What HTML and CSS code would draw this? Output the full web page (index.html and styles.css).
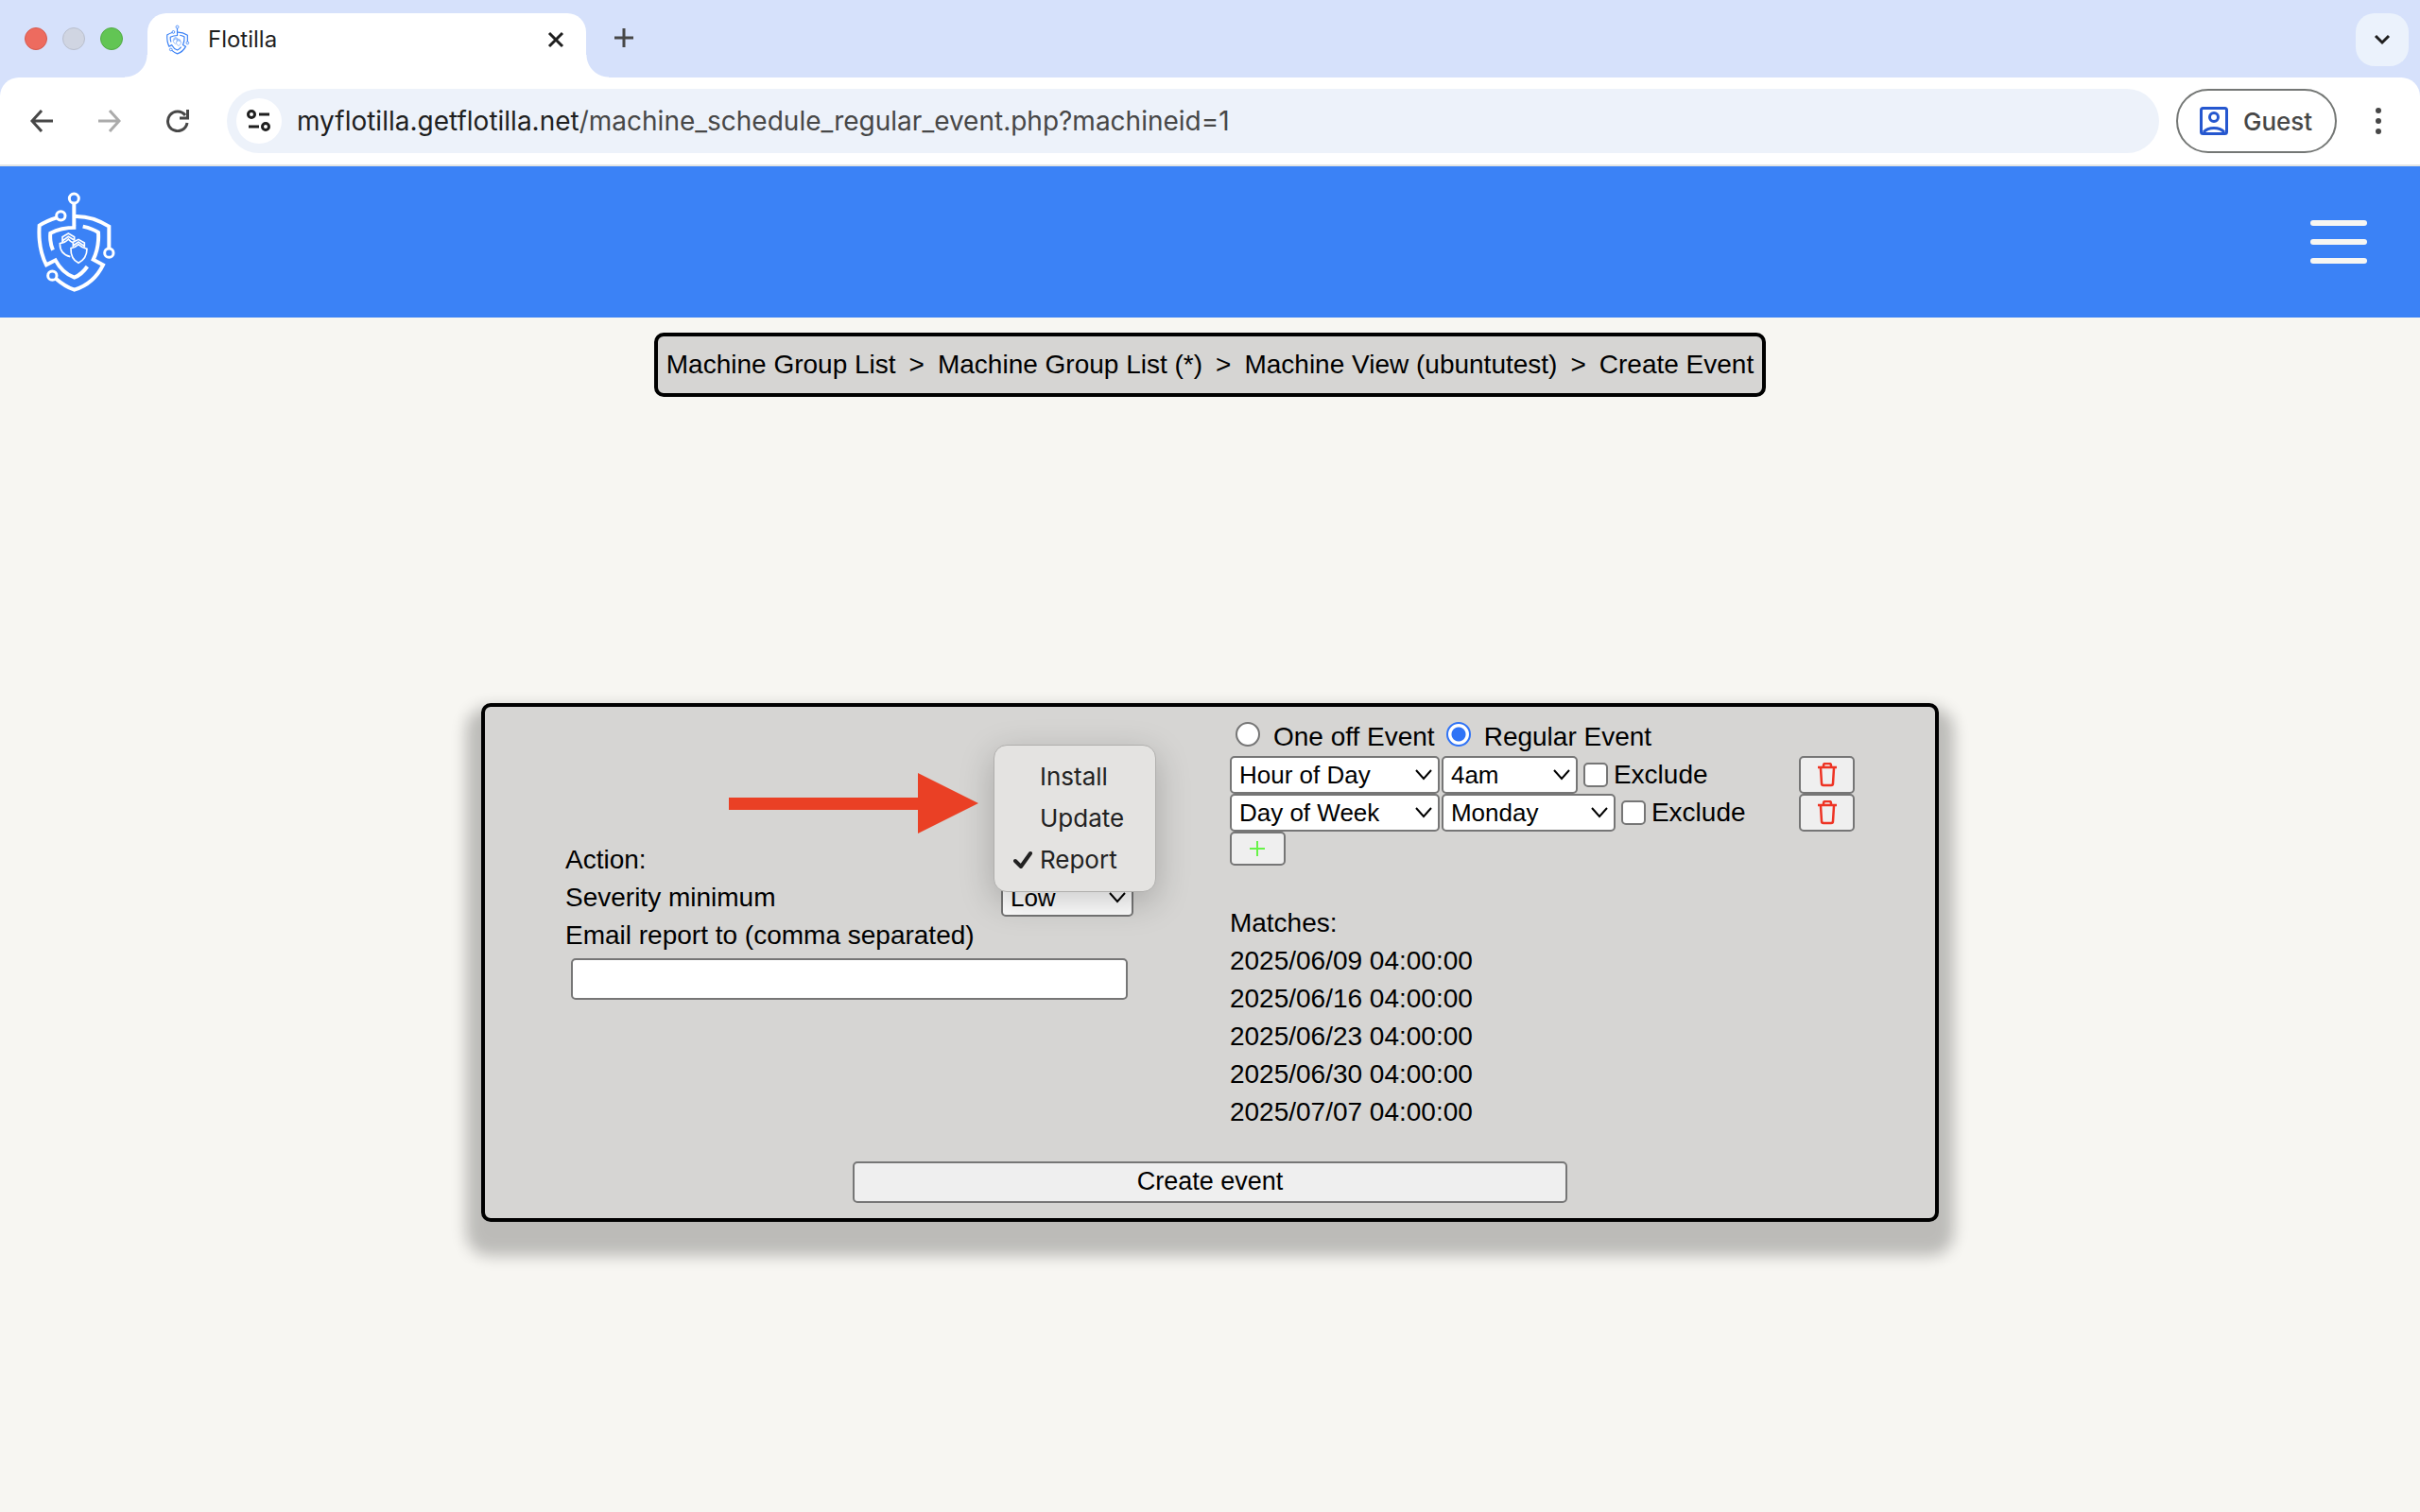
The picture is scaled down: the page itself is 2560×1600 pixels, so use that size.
FILE: index.html
```html
<!DOCTYPE html>
<html lang="en">
<head>
<meta charset="utf-8">
<title>Flotilla</title>
<link rel="stylesheet" href="styles.css">
</head>
<body>
<svg class="defs" aria-hidden="true">
  <symbol id="shield" viewBox="50 34 258 328">
    <g fill="none" stroke="currentColor" stroke-width="9">
      <circle cx="174" cy="60" r="15"/>
      <circle cx="132" cy="115" r="14"/>
      <circle cx="285" cy="233" r="14"/>
      <circle cx="105" cy="305" r="14"/>
      <path stroke-width="12" d="M174 76V152M180 152C150 152 121 158 99 170C97 192 99 206 107 224"/>
      <path stroke-width="12" d="M174 117C215 115 252 128 285 149V219"/>
      <path stroke-width="12" d="M119 121C99 127 80 135 64 146C61 190 66 232 86 271L115 256C129 282 148 301 175 311C192 304 205 292 216 276"/>
      <path stroke-width="12" d="M202 149C220 153 237 158 251 168C253 200 248 228 235 254L266 271C247 310 219 336 175 350C152 342 134 330 116 314"/>
      <g stroke-width="5">
        <path d="M164 218C163 242 171 256 188 265C205 256 215 242 215 220C204 218 195 213 188 206C181 213 173 217 164 218Z"/>
        <path d="M171 214V199L188 190L207 201V215M171 210L188 198L207 212"/>
        <path d="M162 245C142 240 129 225 129 203C141 201 150 196 156 189C160 194 165 198 170 200M137 199V182L156 171L175 182V194M137 195L156 181L174 192"/>
      </g>
    </g>
  </symbol>
  <symbol id="chevron" viewBox="0 0 20 12"><path d="M2 1L10 10L18 1" fill="none" stroke="currentColor" stroke-width="2"/></symbol>
  <symbol id="trash" viewBox="0 0 22 26">
    <path d="M1 5H21M7 5V3Q7 1 9 1H13Q15 1 15 3V5M4 6L5 22Q5 24 7 24H15Q17 24 17 22L18 6" fill="none" stroke="currentColor" stroke-width="2.500"/>
  </symbol>
</svg>

<div class="browser">
  <div class="tabstrip">
    <div class="lights"><span class="light red"></span><span class="light grey"></span><span class="light green"></span></div>
    <div class="tab">
      <svg class="favicon"><use href="#shield"/></svg>
      <span class="tab-title">Flotilla</span>
      <button class="icon-button" aria-label="Close tab"><svg width="18" height="18" viewBox="0 0 18 18"><path d="M2 2L16 16M16 2L2 16" stroke="#1f1f1f" stroke-width="3"/></svg></button>
    </div>
    <button class="icon-button new-tab" aria-label="New tab"><svg width="20" height="20" viewBox="0 0 20 20"><path d="M10 0V20M0 10H20" stroke="#474747" stroke-width="3"/></svg></button>
    <button class="tab-search" aria-label="Search tabs"><svg width="18" height="12" viewBox="0 0 18 12"><path d="M2 2L9 9L16 2" fill="none" stroke="#1f1f1f" stroke-width="3"/></svg></button>
  </div>
  <div class="toolbar">
    <div class="nav">
      <button class="icon-button" aria-label="Back"><svg width="24" height="24" viewBox="0 0 24 24"><path d="M12 1L2 12L12 23M2 12H24" fill="none" stroke="#474747" stroke-width="3"/></svg></button>
      <button class="icon-button" aria-label="Forward"><svg width="24" height="24" viewBox="0 0 24 24"><path d="M12 1L22 12L12 23M22 12H0" fill="none" stroke="#ababab" stroke-width="3"/></svg></button>
      <button class="icon-button" aria-label="Reload"><svg width="24" height="24" viewBox="0 0 24 24"><path d="M22 14A10.300 10.300 0 1 1 20 6M22.500 0V9H14" fill="none" stroke="#474747" stroke-width="3"/></svg></button>
    </div>
    <div class="omnibox">
      <button class="site-info" aria-label="View site information"><svg width="26" height="24" viewBox="0 0 26 24"><g fill="none" stroke="#1f1f1f" stroke-width="3"><circle cx="5" cy="5" r="3.500"/><path d="M13 5H24M2 18H13"/><circle cx="20" cy="18" r="3.500"/></g></svg></button>
      <div class="url" role="textbox" aria-label="Address"><span class="host">myflotilla.getflotilla.net</span>/machine_schedule_regular_event.php?machineid=1</div>
    </div>
    <button class="profile">
      <svg width="30" height="30" viewBox="0 0 30 30" fill="none" stroke="#2557cf" stroke-width="3"><rect x="1.500" y="1.500" width="27" height="27" rx="2"/><circle cx="15" cy="11" r="4.500"/><path d="M4 27C9 21 21 21 26 27"/></svg>
      Guest
    </button>
    <button class="icon-button more" aria-label="More"><svg width="6" height="28" viewBox="0 0 6 28" fill="#474747"><circle cx="3" cy="3" r="3"/><circle cx="3" cy="14" r="3"/><circle cx="3" cy="25" r="3"/></svg></button>
  </div>
</div>

<header class="site-header">
  <a href="#" aria-label="Flotilla home"><svg class="logo"><use href="#shield"/></svg></a>
  <button class="menu-button" aria-label="Menu"><span class="bar"></span><span class="bar"></span><span class="bar"></span></button>
</header>

<main class="page">
  <nav class="breadcrumb" aria-label="Breadcrumb">
    <a href="#">Machine Group List</a><span>&gt;</span>
    <a href="#">Machine Group List (*)</a><span>&gt;</span>
    <a href="#">Machine View (ubuntutest)</a><span>&gt;</span>
    <a href="#">Create Event</a>
  </nav>

  <form class="panel">
    <div class="columns">
      <section class="settings">
        <div class="setting">
          <label for="action">Action:</label>
          <span class="action-field">
            <span class="select low"><select id="action"><option>Install</option><option>Update</option><option selected>Report</option></select></span>
            <ul class="popup">
              <li>Install</li>
              <li>Update</li>
              <li><svg class="tick" width="20" height="20" viewBox="0 0 20 20"><path d="M2 11L8 17L18 3" fill="none" stroke="currentColor" stroke-width="4" stroke-linecap="round" stroke-linejoin="round"/></svg>Report</li>
            </ul>
            <svg class="arrow" viewBox="0 0 264 64"><path d="M0 26H200V0L264 32L200 64V39H0Z" fill="#ea4025"/></svg>
          </span>
        </div>
        <div class="setting">
          <label for="severity">Severity minimum</label>
          <span class="select low"><select id="severity"><option>Low</option></select><svg><use href="#chevron"/></svg></span>
        </div>
        <label class="line" for="email">Email report to (comma separated)</label>
        <input class="email" id="email" type="text">
      </section>

      <section class="schedule">
        <div class="kinds">
          <label><input class="radio" type="radio" name="kind"><span>One off Event</span></label>
          <label><input class="radio" type="radio" name="kind" checked><span>Regular Event</span></label>
        </div>
        <div class="rule">
          <span class="select unit"><select aria-label="Unit"><option>Hour of Day</option></select><svg><use href="#chevron"/></svg></span>
          <span class="select hour"><select aria-label="Hour"><option>4am</option></select><svg><use href="#chevron"/></svg></span>
          <label class="exclude"><input class="check" type="checkbox">Exclude</label>
          <button class="small-button delete" type="button" aria-label="Delete rule"><svg width="22" height="26"><use href="#trash"/></svg></button>
        </div>
        <div class="rule">
          <span class="select unit"><select aria-label="Unit"><option>Day of Week</option></select><svg><use href="#chevron"/></svg></span>
          <span class="select day"><select aria-label="Day"><option>Monday</option></select><svg><use href="#chevron"/></svg></span>
          <label class="exclude"><input class="check" type="checkbox">Exclude</label>
          <button class="small-button delete" type="button" aria-label="Delete rule"><svg width="22" height="26"><use href="#trash"/></svg></button>
        </div>
        <button class="small-button add" type="button" aria-label="Add rule"><svg width="16" height="16" viewBox="0 0 16 16"><path d="M8 0V16M0 8H16" stroke="currentColor" stroke-width="2"/></svg></button>
        <div class="matches">
          <div class="line">Matches:</div>
          <div class="line">2025/06/09 04:00:00</div>
          <div class="line">2025/06/16 04:00:00</div>
          <div class="line">2025/06/23 04:00:00</div>
          <div class="line">2025/06/30 04:00:00</div>
          <div class="line">2025/07/07 04:00:00</div>
        </div>
      </section>
    </div>
    <button class="create" type="button">Create event</button>
  </form>
</main>
</body>
</html>
```
FILE: styles.css
```css
* { box-sizing: border-box; }

body {
  margin: 0;
  min-height: 100vh;
  display: flex;
  flex-direction: column;
  background: #f7f6f2;
  color: #000;
  font: 28px/40px "Liberation Sans", Arial, sans-serif;
}

button, select, input { font-family: inherit; margin: 0; }
button { padding: 0; color: inherit; }
svg { display: block; flex: none; }
.defs { position: absolute; width: 0; height: 0; }

/* Browser window */
.browser {
  background: #d6e1fb;
  font-family: Inter, sans-serif;
  color: #1f1f1f;
}
.tabstrip { display: flex; height: 82px; padding: 14px 12px 0 26px; }
.lights { display: flex; gap: 16px; padding-top: 15px; width: 130px; }
.light { width: 24px; height: 24px; border-radius: 50%; border: 1px solid; }
.red { background: #ed6b5f; border-color: #d65a4e; }
.grey { background: #d0d5e2; border-color: #b9bfcd; }
.green { background: #62c554; border-color: #52ab45; }
.tab {
  position: relative;
  display: flex;
  align-items: center;
  width: 464px;
  padding: 0 23px 12px 19px;
  background: #fff;
  border-radius: 20px 20px 0 0;
  font-size: 24px;
}
.tab::before, .tab::after {
  content: "";
  position: absolute;
  bottom: 0;
  width: 24px;
  height: 24px;
}
.tab::before { right: 100%; background: radial-gradient(circle at 0 0, transparent 23px, #fff 24px); }
.tab::after { left: 100%; background: radial-gradient(circle at 100% 0, transparent 23px, #fff 24px); }
.favicon { width: 26px; height: 32px; color: #3b82f6; }
.tab-title { flex: 1; padding-left: 19px; }
.icon-button { display: grid; place-items: center; border: 0; background: none; }
.new-tab { margin-left: 30px; height: 52px; }
.tab-search {
  display: grid;
  place-items: center;
  width: 56px;
  height: 56px;
  margin-left: auto;
  border: 0;
  border-radius: 20px;
  background: #ebf2fc;
}
.toolbar {
  display: flex;
  align-items: center;
  height: 94px;
  padding: 0 41px 0 32px;
  background: #fff;
  border-bottom: 2px solid #e3e5e4;
  border-radius: 20px 20px 0 0;
}
.nav { display: flex; gap: 48px; }
.omnibox {
  display: flex;
  align-items: center;
  flex: 1;
  height: 68px;
  margin: 0 18px 0 40px;
  padding-left: 10px;
  border-radius: 34px;
  background: #edf2fa;
}
.site-info {
  display: grid;
  place-items: center;
  width: 48px;
  height: 48px;
  border: 0;
  border-radius: 50%;
  background: #fff;
}
.url { padding-left: 16px; font-size: 28px; color: #474747; }
.host { color: #1f1f1f; }
.profile {
  display: flex;
  align-items: center;
  gap: 16px;
  width: 170px;
  height: 68px;
  padding-left: 23px;
  border: 2px solid #747775;
  border-radius: 34px;
  background: #fff;
  font-size: 26px;
  font-weight: 500;
  color: #474747;
}
.more { margin-left: 41px; }

/* Site header */
.site-header {
  display: flex;
  justify-content: space-between;
  align-items: center;
  height: 160px;
  padding: 0 56px 0 37px;
  background: #3b82f6;
  color: #fff;
}
.site-header a { color: inherit; }
.logo { width: 86px; height: 110px; }
.menu-button {
  display: flex;
  flex-direction: column;
  gap: 14px;
  width: 60px;
  border: 0;
  background: none;
}
.bar { width: 100%; height: 6px; border-radius: 3px; background: #f7f6f2; }

/* Page */
.page {
  flex: 1;
  display: flex;
  flex-direction: column;
  align-items: center;
  padding-top: 16px;
}
.breadcrumb {
  display: flex;
  gap: 14px;
  padding: 10px 9px;
  margin-bottom: 16px;
  border: 4px solid #000;
  border-radius: 10px;
  background: #d6d5d3;
}
.breadcrumb a { color: inherit; text-decoration: none; }
.panel {
  width: calc(60% + 6px);
  margin: auto;
  padding: 12px 85px 16px;
  border: 4px solid #000;
  border-radius: 10px;
  background: #d6d5d3;
  box-shadow: 0 20px 16px 16px rgba(0, 0, 0, 0.24);
}
.columns {
  display: grid;
  grid-template-columns: 10fr 11fr;
  column-gap: 102px;
  align-items: center;
}
.settings { padding-bottom: 8px; }
.line { display: block; height: 40px; }
.setting { display: flex; justify-content: space-between; align-items: center; height: 40px; }

.select { display: grid; align-items: center; }
.select > * { grid-area: 1 / 1; }
.select select {
  appearance: none;
  width: 100%;
  height: 40px;
  padding: 0 8px;
  border: 2px solid #767676;
  border-radius: 5px;
  background: #fff;
  color: #000;
  font-size: 26px;
}
.select svg { justify-self: end; width: 20px; height: 12px; margin-right: 7px; pointer-events: none; }
.low { width: 140px; }
.unit { width: 222px; }
.hour { width: 144px; }
.day { width: 184px; }

/* Open list of the action field */
.action-field { position: relative; }
.popup {
  position: absolute;
  z-index: 1;
  right: -24px;
  bottom: -14px;
  width: 172px;
  margin: 0;
  padding: 11px 0;
  border: 1px solid #b0afad;
  border-radius: 14px;
  background: #e4e3e1;
  box-shadow: 0 10px 36px rgba(0, 0, 0, 0.22);
  color: #222;
  font: 26px/44px Inter, sans-serif;
  list-style: none;
}
.popup li { display: flex; align-items: center; justify-content: flex-start; height: 44px; padding-left: 48px; }
.tick { width: 20px; margin: 0 8px 0 -28px; }
.arrow { position: absolute; z-index: 2; right: 164px; bottom: 48px; width: 264px; height: 64px; }

.email {
  display: block;
  width: calc(100% - 12px);
  height: 44px;
  margin: 4px 6px 0;
  padding: 0 8px;
  border: 2px solid #767676;
  border-radius: 5px;
  background: #fff;
  font-size: 26px;
}

.kinds { display: flex; gap: 12px; height: 40px; padding-left: 6px; }
.kinds label { display: flex; gap: 14px; }
.radio {
  appearance: none;
  width: 26px;
  height: 26px;
  margin-top: 4px;
  border: 2px solid #767676;
  border-radius: 50%;
  background: #fff;
}
.radio:checked { border-color: #2f73f6; background: radial-gradient(circle, #2f73f6 7px, #fff 8px); }
.rule { display: flex; align-items: center; gap: 2px; height: 40px; }
.exclude { display: flex; align-items: center; gap: 6px; padding-left: 4px; }
.check {
  appearance: none;
  width: 26px;
  height: 26px;
  border: 2px solid #767676;
  border-radius: 5px;
  background: #fff;
}
.small-button, .create {
  display: grid;
  place-items: center;
  border: 2px solid #767676;
  border-radius: 5px;
  background: #efefef;
}
.small-button { width: 59px; height: 40px; }
.delete { margin-left: auto; color: #ee3323; }
.add { height: 36px; color: #67f348; }
.matches { padding-top: 41px; }
.create {
  width: 756px;
  max-width: 100%;
  height: 44px;
  margin: 32px auto 0;
  font-size: 27px;
}
```
